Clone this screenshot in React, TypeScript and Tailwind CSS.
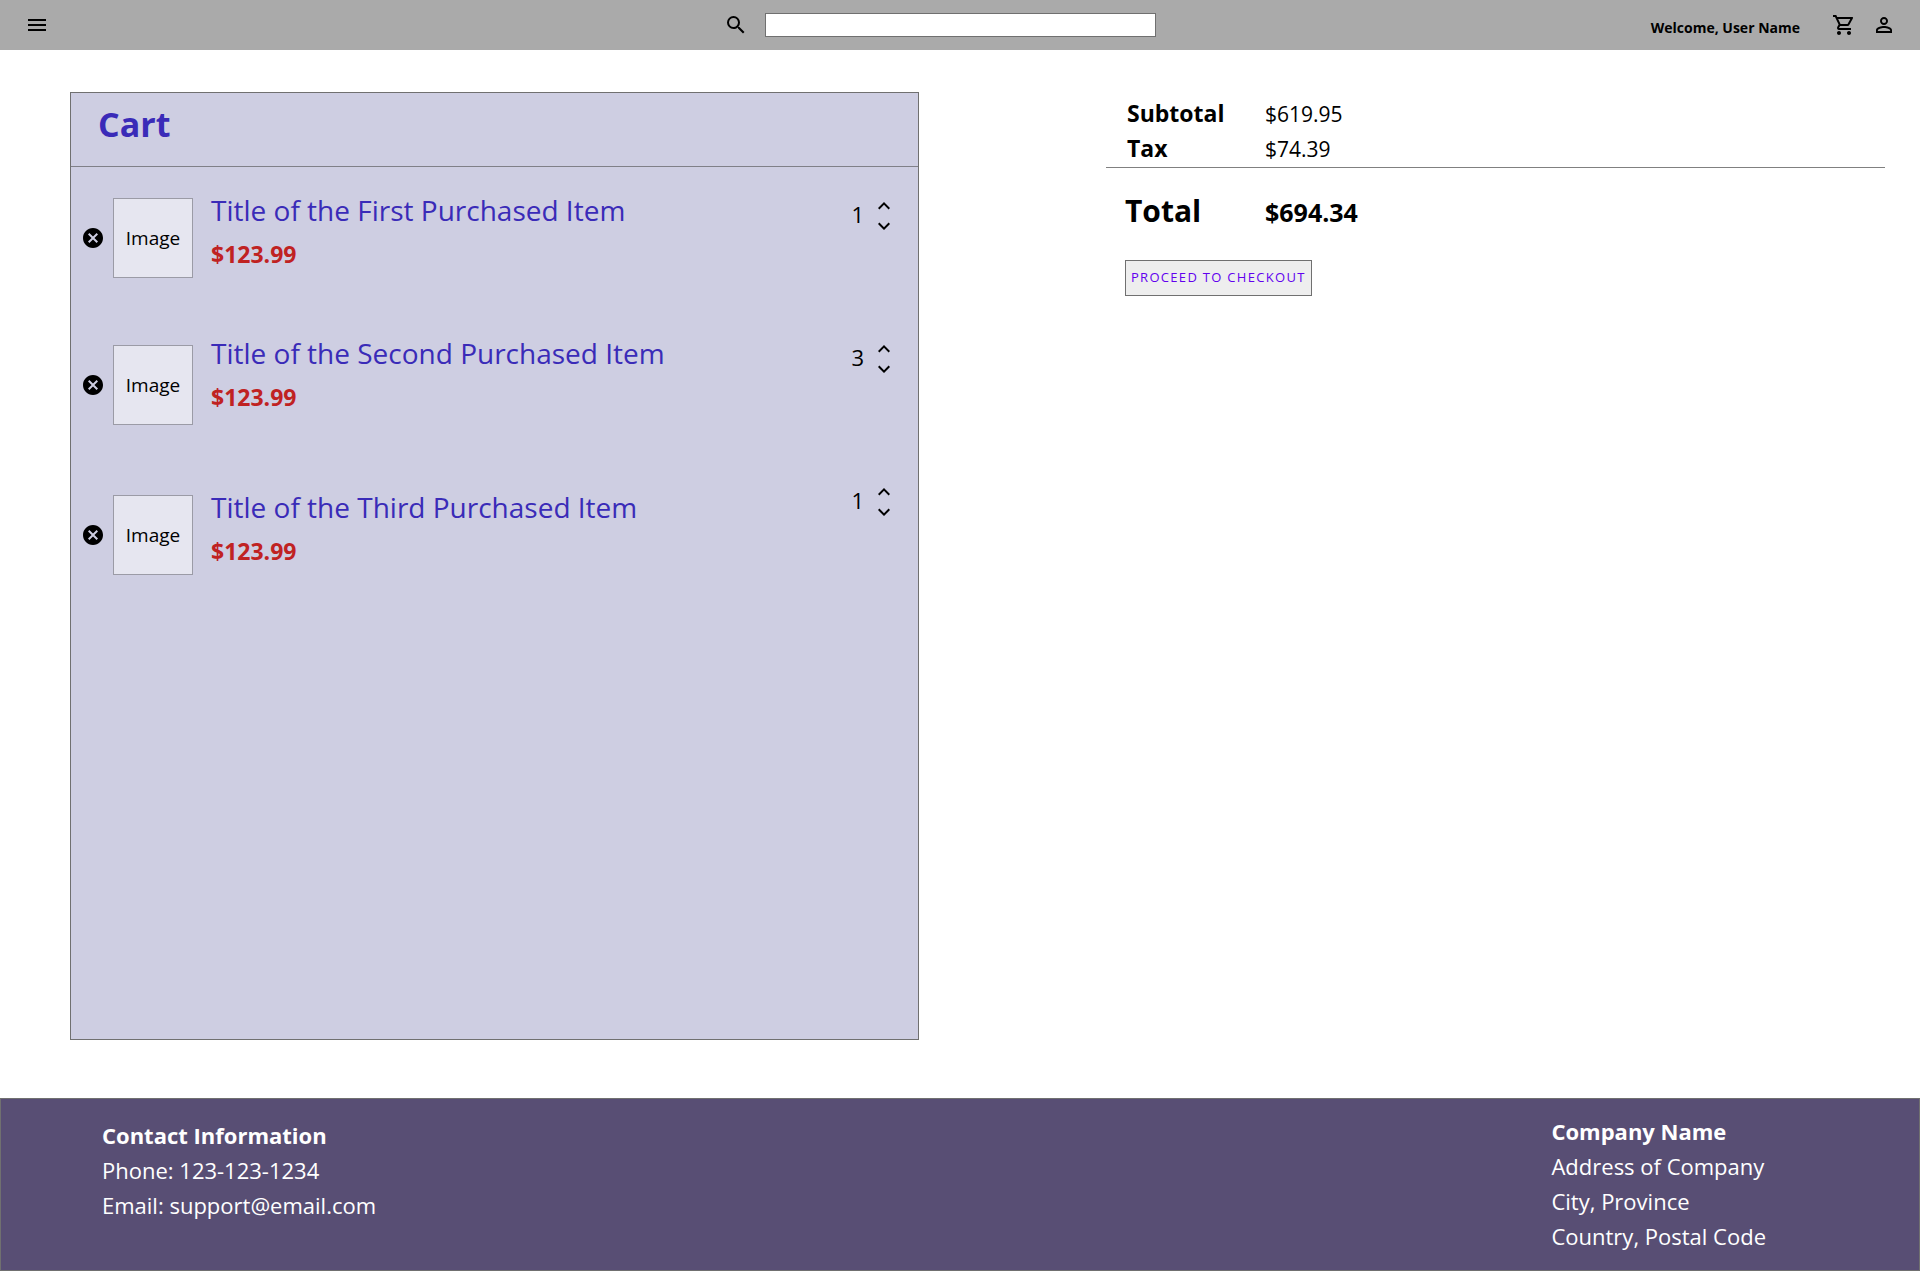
import { useState } from "react";
import {
  MdCancel,
  MdExpandLess,
  MdExpandMore,
  MdMenu,
  MdOutlineShoppingCart,
  MdPersonOutline,
  MdSearch,
} from "react-icons/md";

const items = [
  { title: "Title of the First Purchased Item", price: "$123.99", quantity: 1, row: "h-[82px]", text: "self-start" },
  { title: "Title of the Second Purchased Item", price: "$123.99", quantity: 3, row: "h-[86px]", text: "self-start" },
  { title: "Title of the Third Purchased Item", price: "$123.99", quantity: 1, row: "h-[93px]", text: "self-end" },
];

function Header() {
  return (
    <header className="flex h-[50px] items-center bg-[#aaaaaa] pr-6 pl-[25px]">
      <div className="flex flex-1 items-center">
        <button type="button" aria-label="Menu">
          <MdMenu className="size-6" />
        </button>
      </div>
      <form role="search" className="mr-[42px] flex items-center gap-[17px]">
        <button type="submit" aria-label="Search">
          <MdSearch className="size-6" />
        </button>
        <input
          type="search"
          aria-label="Search products"
          className="h-6 w-[391px] border border-[#707070] bg-white px-2 text-sm outline-none"
        />
      </form>
      <div className="flex flex-1 items-center justify-end">
        <p className="mr-8 pt-1.5 text-[14px] leading-5 font-bold">Welcome, User Name</p>
        <a href="#cart" aria-label="Cart" className="mr-4">
          <MdOutlineShoppingCart className="size-6" />
        </a>
        <a href="#account" aria-label="Account">
          <MdPersonOutline className="size-6" />
        </a>
      </div>
    </header>
  );
}

function CartItem({ title, price, quantity, row, text }: (typeof items)[number]) {
  const [count, setCount] = useState(quantity);
  return (
    <li className="h-[143px]">
      <div className={`flex ${row}`}>
        <div className="flex h-20 items-center gap-2 self-end">
          <button type="button" aria-label={`Remove ${title}`}>
            <MdCancel className="size-6" />
          </button>
          <div className="flex size-20 items-center justify-center border border-[#9b9ba6] bg-[#e6e6f0] text-[19px]">
            Image
          </div>
        </div>
        <div className={`ml-[18px] flex-1 pb-2.5 ${text}`}>
          <h2 className="text-[28px] leading-7 text-[#3a2bb8]">{title}</h2>
          <p className="mt-4 text-[23px] leading-7 font-bold text-[#c02222]">{price}</p>
        </div>
        <div className="flex gap-2 self-start">
          <output className="pt-1 text-[22px] leading-7">{count}</output>
          <div className="flex flex-col">
            <button
              type="button"
              aria-label={`Increase quantity of ${title}`}
              className="flex h-5 items-center"
              onClick={() => setCount(count + 1)}
            >
              <MdExpandLess className="size-6 shrink-0" />
            </button>
            <button
              type="button"
              aria-label={`Decrease quantity of ${title}`}
              className="flex h-5 items-center"
              onClick={() => setCount(Math.max(1, count - 1))}
            >
              <MdExpandMore className="size-6 shrink-0" />
            </button>
          </div>
        </div>
      </div>
    </li>
  );
}

function Summary() {
  return (
    <aside>
      <dl className="grid grid-cols-[138px_1fr] items-baseline border-b border-[#808080] pt-1 pb-px pl-[21px] leading-[34px]">
        <dt className="text-[23px] font-bold">Subtotal</dt>
        <dd className="text-[21px]">$619.95</dd>
        <dt className="text-[23px] font-bold">Tax</dt>
        <dd className="text-[21px]">$74.39</dd>
      </dl>
      <dl className="mt-[19px] grid grid-cols-[140px_1fr] items-baseline pl-[19px] leading-12">
        <dt className="text-[30px] font-bold">Total</dt>
        <dd className="text-[25px] font-bold">$694.34</dd>
      </dl>
      <button
        type="button"
        className="mt-6 ml-[19px] h-9 border border-[#707070] bg-[#eeeeee] px-[5px] text-[13px] tracking-widest text-[#6200ee]"
      >
        PROCEED TO CHECKOUT
      </button>
    </aside>
  );
}

function Footer() {
  return (
    <footer className="flex h-[173px] justify-between border border-[#707070] bg-[#584e74] pr-[153px] pl-[101px] text-[22px] leading-[35px] text-white">
      <address className="pt-[19px] not-italic">
        <p className="font-bold">Contact Information</p>
        <p>Phone: 123-123-1234</p>
        <p>Email: support@email.com</p>
      </address>
      <address className="pt-[15px] not-italic">
        <p className="font-bold">Company Name</p>
        <p>Address of Company</p>
        <p>City, Province</p>
        <p>Country, Postal Code</p>
      </address>
    </footer>
  );
}

export default function App() {
  return (
    <div className="flex min-h-screen flex-col bg-white font-['Open_Sans','Noto_Sans',sans-serif] text-black">
      <Header />
      <main className="grid flex-1 grid-cols-[849fr_779fr] gap-[187px] pt-[42px] pr-[35px] pb-[58px] pl-[70px]">
        <section className="border border-[#707070] bg-[#cecee2]">
          <div className="h-[74px] border-b border-[#808088] pt-2 pl-[27px]">
            <h1 className="text-[34px] leading-[46px] font-bold text-[#3a2bb8]">Cart</h1>
          </div>
          <ul className="pt-[29px] pr-[22px] pl-[10px]">
            {items.map((item) => (
              <CartItem key={item.title} {...item} />
            ))}
          </ul>
        </section>
        <Summary />
      </main>
      <Footer />
    </div>
  );
}
